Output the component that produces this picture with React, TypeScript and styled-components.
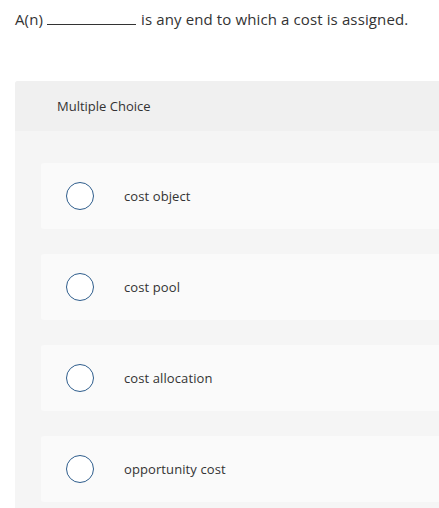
import React from "react";
import styled, { createGlobalStyle } from "styled-components";

const Global = createGlobalStyle`
  html, body { margin: 0; padding: 0; background: #ffffff; }
  body { font-family: "Open Sans", Lato, Arial, sans-serif; color: #333333; }
`;

const Page = styled.div`
  width: 439px;
  height: 508px;
  overflow: hidden;
  display: flex;
  flex-direction: column;
`;

const Question = styled.p`
  margin: 0;
  padding: 9px 0 0 15px;
  height: 81px;
  box-sizing: border-box;
  font-size: 15px;
  letter-spacing: 0.12px;
  line-height: 20px;
  color: #333;
  display: flex;
  align-items: baseline;
  white-space: nowrap;
`;

const Blank = styled.span`
  display: inline-block;
  width: 89px;
  margin: 0 5px 0 4px;
  border-bottom: 1px solid #333;
  height: 1px;
`;

const Panel = styled.section`
  margin-left: 15px;
  background: #f5f5f5;
  border-top-left-radius: 3px;
  flex: 1;
  display: flex;
  flex-direction: column;
`;

const Header = styled.div`
  background: #f0f0f0;
  height: 50px;
  padding-left: 42px;
  display: flex;
  align-items: center;
  font-size: 13px;
  color: #333;
  border-top-left-radius: 3px;
`;

const Options = styled.ul`
  list-style: none;
  margin: 0;
  padding: 32px 0 0 26px;
  display: flex;
  flex-direction: column;
  gap: 25px;
`;

const Option = styled.li`
  height: 66px;
  background: #fafafa;
  border-radius: 3px 0 0 3px;
  display: flex;
  align-items: center;
  padding-left: 25px;
`;

const Radio = styled.span`
  width: 28px;
  height: 28px;
  box-sizing: border-box;
  border: 1.5px solid #2e5d8c;
  border-radius: 50%;
  background: #fff;
  flex: none;
`;

const Label = styled.span`
  margin-left: 30px;
  font-size: 13px;
  letter-spacing: 0.1px;
  color: #333;
`;

const choices = ["cost object", "cost pool", "cost allocation", "opportunity cost"];

export default function App() {
  return (
    <Page>
      <Global />
      <Question>
        A(n)
        <Blank />
        is any end to which a cost is assigned.
      </Question>
      <Panel>
        <Header>Multiple Choice</Header>
        <Options>
          {choices.map((c) => (
            <Option key={c}>
              <Radio />
              <Label>{c}</Label>
            </Option>
          ))}
        </Options>
      </Panel>
    </Page>
  );
}
